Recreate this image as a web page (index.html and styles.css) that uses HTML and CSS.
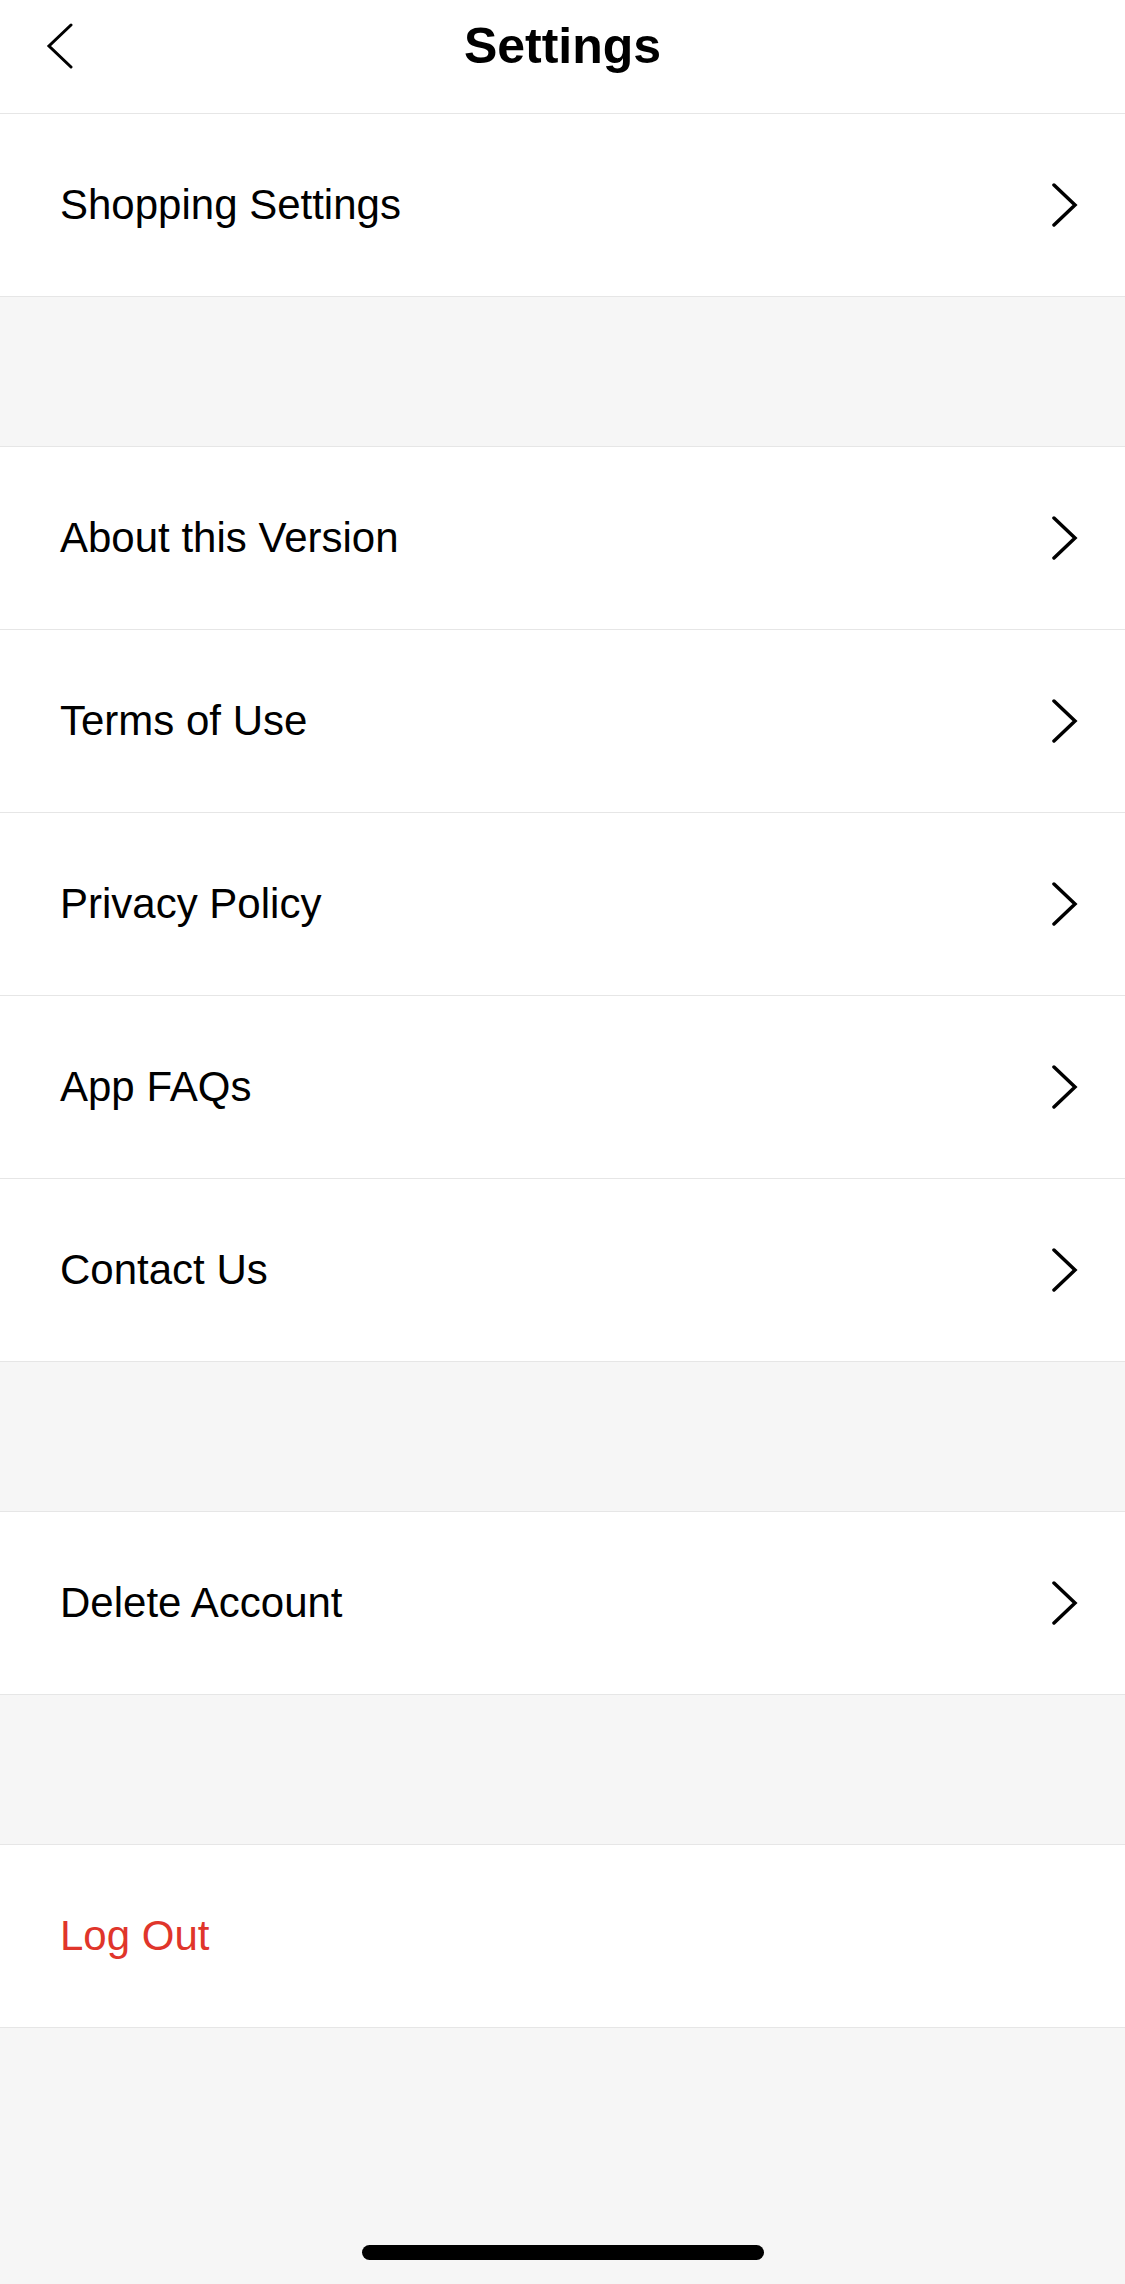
FILE: index.html
```html
<!DOCTYPE html>
<html lang="en">
<head>
<meta charset="UTF-8">
<meta name="viewport" content="width=device-width, initial-scale=1.0">
<title>Settings</title>
<link rel="stylesheet" href="styles.css">
</head>
<body>
    <div class="page">
        <div class="header">
            <div class="header-left">
                <svg class="back" width="28" height="46" viewBox="0 0 28 46">
                    <polyline points="25,2 3,23 25,44" fill="none" stroke="#000" stroke-width="3" stroke-linecap="round" stroke-linejoin="miter"/>
                </svg>
            </div>
            <h1 class="title">Settings</h1>
            <div></div>
        </div>

        <div class="group">
            <div class="row">
                <span>Shopping Settings</span>
                <svg class="arrow" width="28" height="44" viewBox="0 0 28 44"><polyline points="3,2 24,22 3,42" fill="none" stroke="#000" stroke-width="3.5" stroke-linecap="round"/></svg>
            </div>
        </div>

        <div class="gap"></div>

        <div class="group top">
            <div class="row">
                <span>About this Version</span>
                <svg class="arrow" width="28" height="44" viewBox="0 0 28 44"><polyline points="3,2 24,22 3,42" fill="none" stroke="#000" stroke-width="3.5" stroke-linecap="round"/></svg>
            </div>
            <div class="row">
                <span>Terms of Use</span>
                <svg class="arrow" width="28" height="44" viewBox="0 0 28 44"><polyline points="3,2 24,22 3,42" fill="none" stroke="#000" stroke-width="3.5" stroke-linecap="round"/></svg>
            </div>
            <div class="row">
                <span>Privacy Policy</span>
                <svg class="arrow" width="28" height="44" viewBox="0 0 28 44"><polyline points="3,2 24,22 3,42" fill="none" stroke="#000" stroke-width="3.5" stroke-linecap="round"/></svg>
            </div>
            <div class="row">
                <span>App FAQs</span>
                <svg class="arrow" width="28" height="44" viewBox="0 0 28 44"><polyline points="3,2 24,22 3,42" fill="none" stroke="#000" stroke-width="3.5" stroke-linecap="round"/></svg>
            </div>
            <div class="row">
                <span>Contact Us</span>
                <svg class="arrow" width="28" height="44" viewBox="0 0 28 44"><polyline points="3,2 24,22 3,42" fill="none" stroke="#000" stroke-width="3.5" stroke-linecap="round"/></svg>
            </div>
        </div>

        <div class="gap"></div>

        <div class="group top">
            <div class="row">
                <span>Delete Account</span>
                <svg class="arrow" width="28" height="44" viewBox="0 0 28 44"><polyline points="3,2 24,22 3,42" fill="none" stroke="#000" stroke-width="3.5" stroke-linecap="round"/></svg>
            </div>
        </div>

        <div class="gap"></div>

        <div class="group top">
            <div class="row">
                <span class="logout">Log Out</span>
            </div>
        </div>

        <div class="bottom">
            <div class="home-bar"></div>
        </div>
    </div>
</body>
</html>
```

FILE: styles.css
```css
/* settings screen */
body {
    margin: 0;
    font-family: "Liberation Sans", Arial, sans-serif;
    background-color: #f6f6f6;
    color: #000;
}
.page {
    min-height: 2284px;
    display: flex;
    flex-direction: column;
}
.header {
    display: grid;
    grid-template-columns: 1fr auto 1fr;
    align-items: center;
    height: 92px;
    padding-bottom: 21px;
    background-color: #fff;
    border-bottom: 1px solid #e6e6e6;
}
.header-left {
    display: flex;
    align-items: center;
    padding-left: 46px;
}
.back {
    display: block;
}
.title {
    margin: 0;
    font-size: 50px;
    font-weight: bold;
    line-height: 92px;
}
.group {
    background-color: #fff;
}
.group.top {
    border-top: 1px solid #e6e6e6;
}
.row {
    display: flex;
    align-items: center;
    justify-content: space-between;
    height: 182px;
    padding: 0 46px 0 60px;
    font-size: 42px;
    border-bottom: 1px solid #e6e6e6;
}
.arrow {
    display: block;
}
.logout {
    color: #e0352b;
}
.gap {
    height: 149px;
}
.bottom {
    flex: 1;
    display: flex;
    align-items: flex-end;
    justify-content: center;
    padding-bottom: 24px;
}
.home-bar {
    width: 402px;
    height: 15px;
    border-radius: 8px;
    background-color: #000;
}
```
